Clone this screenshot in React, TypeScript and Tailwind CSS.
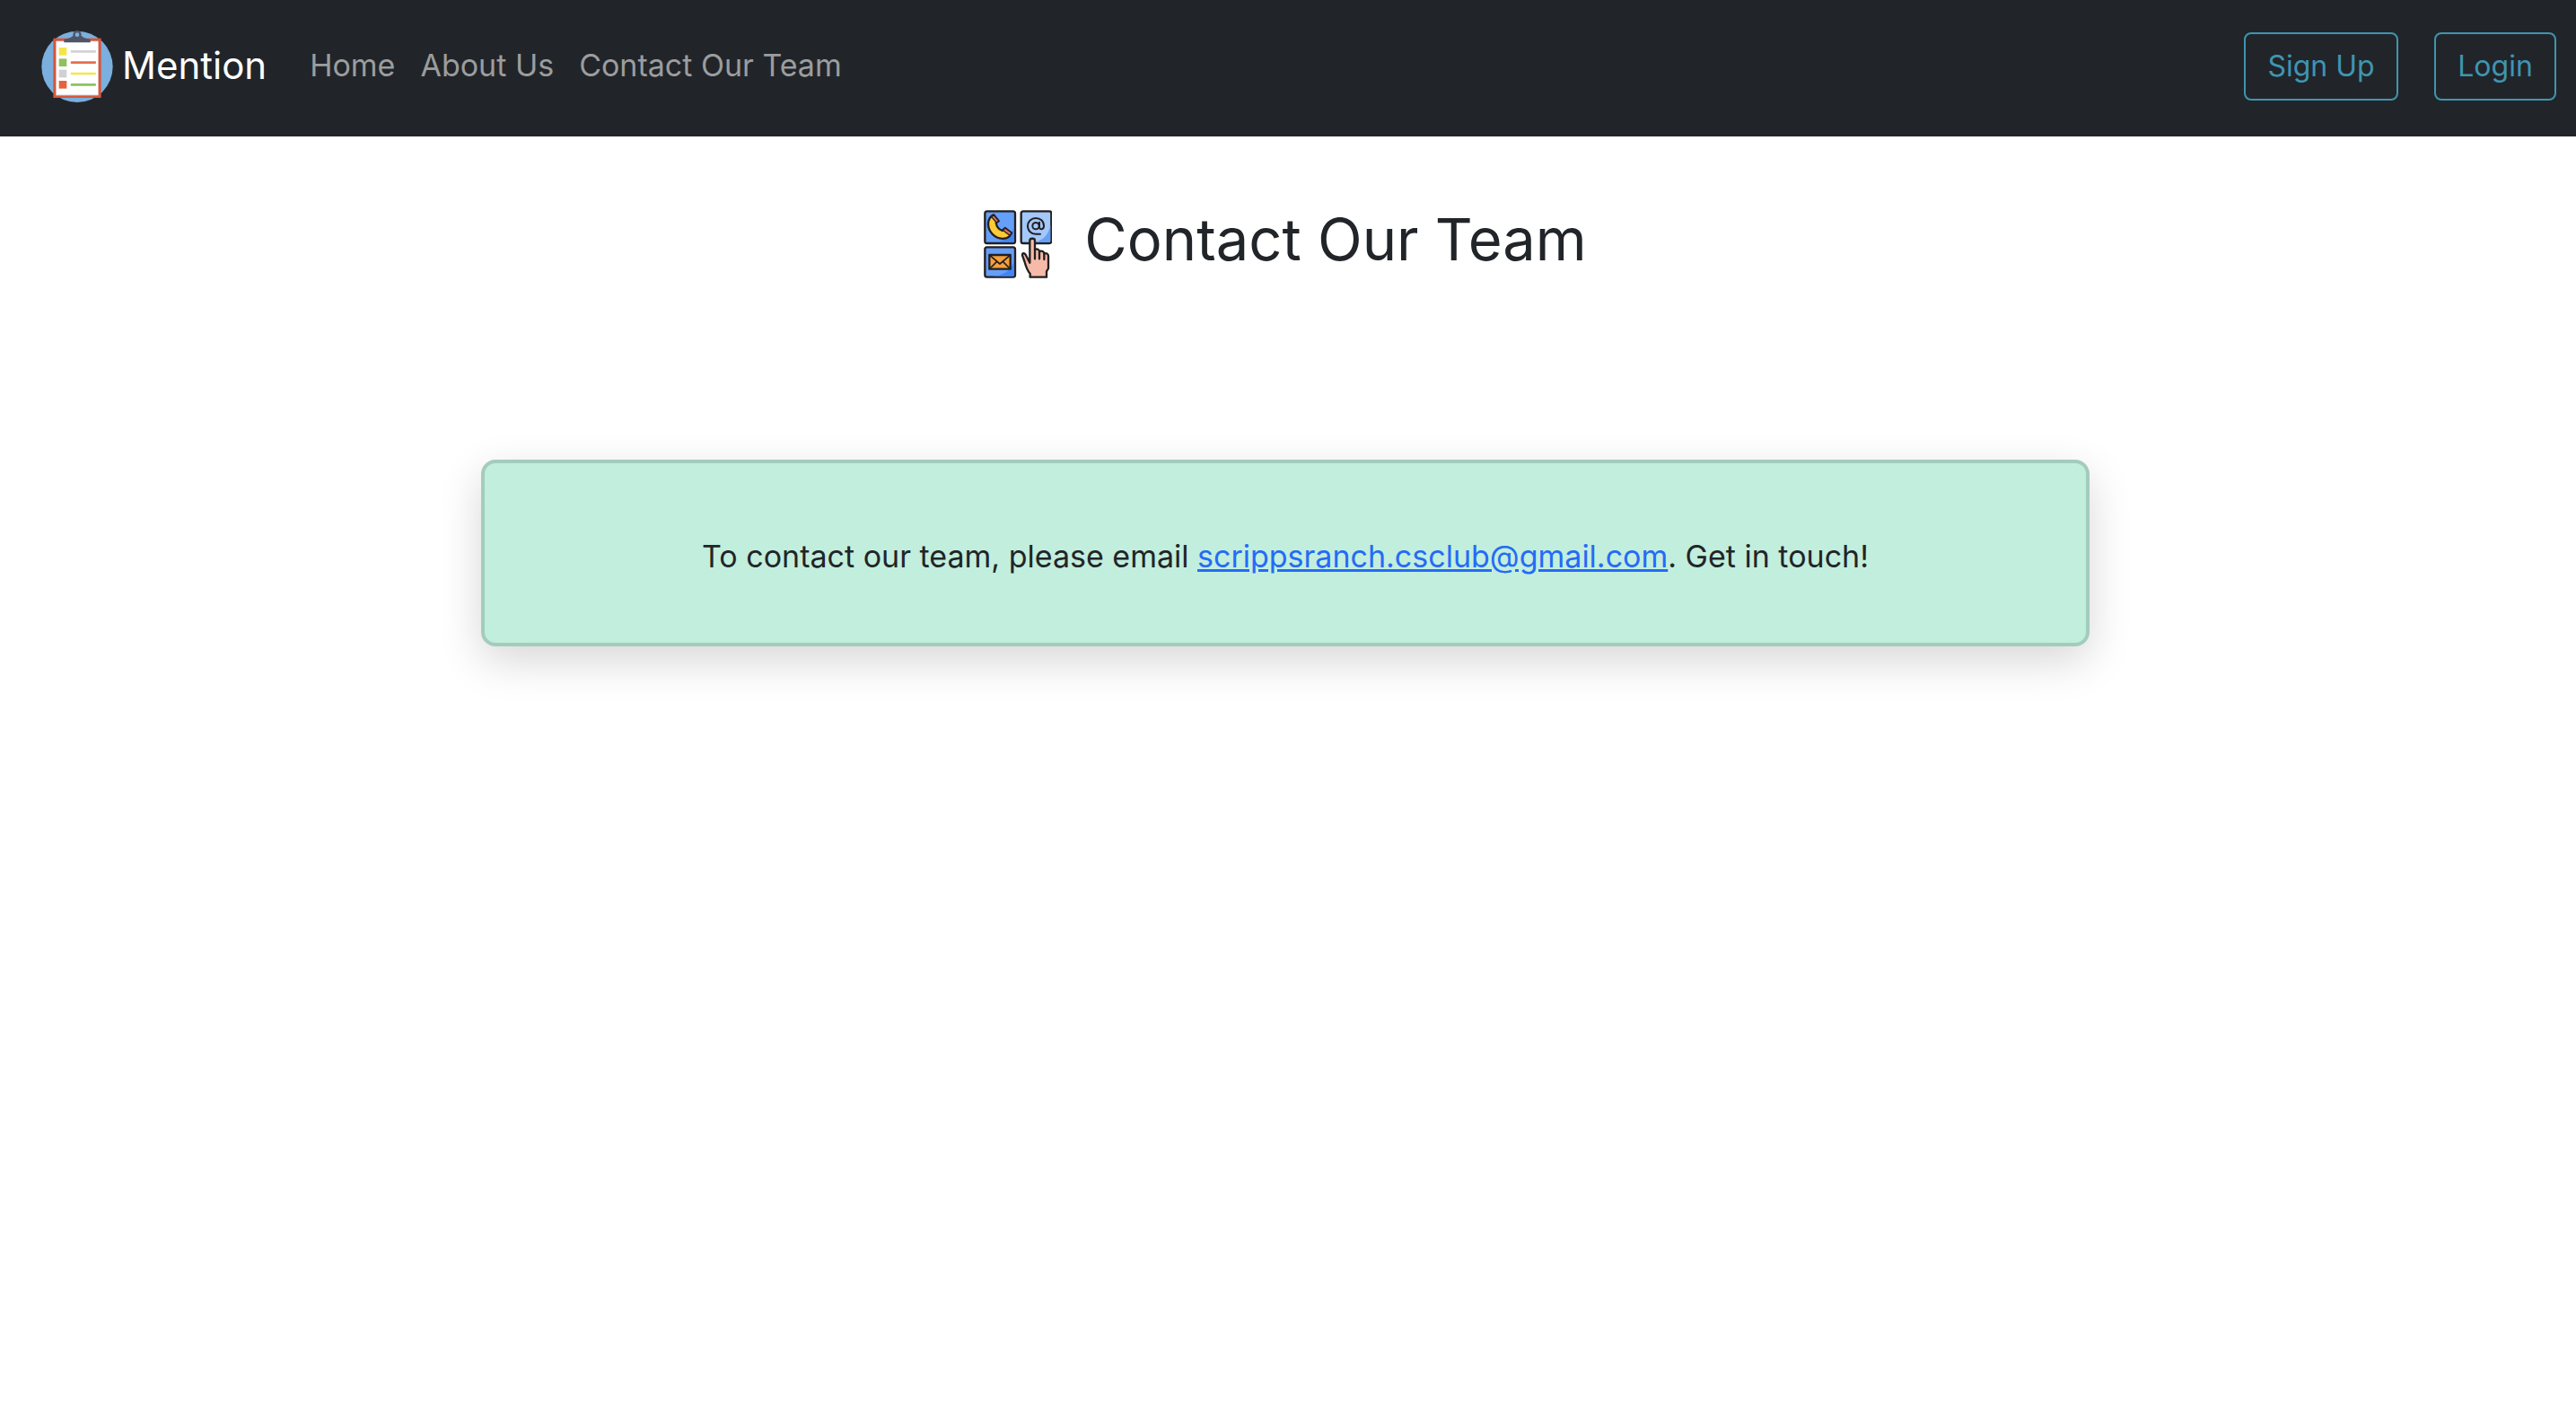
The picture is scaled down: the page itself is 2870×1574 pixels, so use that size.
const links = [
  { label: "Home", href: "#home" },
  { label: "About Us", href: "#about" },
  { label: "Contact Our Team", href: "#contact" },
]

const actions = [
  { label: "Sign Up", width: "min-w-[172px]" },
  { label: "Login", width: "min-w-[136px]" },
]

const rows = [
  { y: 99, box: "#f5e54b", line: "#d2d2d6" },
  { y: 136, box: "#8fc162", line: "#e5704f" },
  { y: 173, box: "#d1d1d4", line: "#f3e64e" },
  { y: 210, box: "#e4633f", line: "#8fc162" },
]

function ChecklistLogo() {
  return (
    <svg viewBox="48 42 240 240" className="h-20 w-20 shrink-0" aria-hidden="true">
      <circle cx="168" cy="163" r="119" fill="#7bafde" />
      <rect x="88" y="68" width="160" height="199" fill="#d6573a" />
      <rect x="97" y="77" width="142" height="182" fill="#e9e4e6" />
      <rect x="99" y="79" width="138" height="176" fill="#fff" />
      <path d="M124 82V72C138 68 150 65 154 59H182C186 65 198 68 212 72V82Z" fill="#4f5565" />
      <circle cx="168" cy="56" r="10.5" fill="#7bafde" stroke="#4f5565" strokeWidth="7" />
      {rows.map((row) => (
        <g key={row.y}>
          <rect x="107" y={row.y} width="26" height="26" fill={row.box} />
          <rect x="146" y={row.y + 9} width="85" height="8" rx="3" fill={row.line} />
        </g>
      ))}
    </svg>
  )
}

function ContactIcon() {
  return (
    <svg
      viewBox="54 57 228 228"
      className="h-[76px] w-[76px] shrink-0"
      fill="none"
      stroke="#231f20"
      strokeWidth="7"
      strokeLinecap="round"
      strokeLinejoin="round"
      aria-hidden="true"
    >
      <rect x="58" y="61" width="101" height="107" rx="7" fill="#659ff8" />
      <path d="M156 112V160Q156 165 151 165H84C120 163 146 145 156 112Z" fill="#3f86f8" stroke="none" />
      <rect x="179" y="61" width="101" height="107" rx="7" fill="#a3c8fa" />
      <path d="M277 108V160Q277 165 272 165H226C252 158 270 140 277 108Z" fill="#659ff8" stroke="none" />
      <rect x="58" y="181" width="101" height="100" rx="7" fill="#659ff8" />
      <path d="M156 225V273Q156 278 151 278H84C120 276 146 260 156 225Z" fill="#3f86f8" stroke="none" />

      <path
        d="M87 73C66 83 64 112 78 131C93 153 120 158 139 146L147 133L125 117L116 126C105 122 97 112 95 100L104 94Z"
        fill="#fdcb35"
      />
      <path d="M87 73L104 93L97 99L80 80Z" fill="#d9765b" strokeWidth="4" />
      <path d="M125 117L147 133L141 142L119 125Z" fill="#d9765b" strokeWidth="4" />

      <circle cx="228" cy="110" r="11" strokeWidth="6" />
      <path
        d="M240 98V114C240 124 255 123 255 110C255 94 243 84 228 84C213 84 201 95 201 110C201 126 213 137 228 137H243"
        strokeWidth="6"
      />

      <rect x="73" y="207" width="70" height="47" fill="#f5a03c" />
      <path d="M75 209L108 237L141 209M75 252L98 229M141 252L118 229" strokeWidth="5" />

      <path
        d="M209 281V270C199 258 195 246 190 228L183 208C182 200 190 200 194 206L208 233V159C208 150 225 150 225 159V190C232 184 240 189 240 196C248 191 256 196 256 203C264 199 270 204 270 211V252L264 262V281Z"
        fill="#f6bba8"
      />
      <path d="M225 188V220M240 196V220M256 203V222" />
    </svg>
  )
}

function Navbar() {
  return (
    <header className="flex min-h-[152px] flex-wrap items-center justify-between bg-[#212529] pl-[46px] pr-[22px] pb-1">
      <nav className="flex items-center" aria-label="Main">
        <a href="#home" className="mr-12 flex items-center gap-2.5 text-[42px] text-white">
          <ChecklistLogo />
          <span className="pb-1">Mention</span>
        </a>
        <ul className="flex items-center gap-7 pb-1 text-[34px] text-[#9b9d9e]">
          {links.map((link) => (
            <li key={link.label}>
              <a href={link.href} className="hover:text-white">
                {link.label}
              </a>
            </li>
          ))}
        </ul>
      </nav>
      <div className="flex items-center gap-10">
        {actions.map((action) => (
          <button
            key={action.label}
            type="button"
            className={`h-[76px] rounded-lg border-2 border-[#3f95b0] text-[32px] text-[#3f95b0] ${action.width}`}
          >
            {action.label}
          </button>
        ))}
      </div>
    </header>
  )
}

export default function App() {
  return (
    <div className="min-h-screen bg-white font-['Inter',sans-serif] text-[#212529]">
      <Navbar />
      <main className="flex flex-col items-center pt-[82px] pr-1.5">
        <div className="flex items-start gap-9">
          <ContactIcon />
          <h1 className="text-[65px] leading-[66px]">Contact Our Team</h1>
        </div>
        <section className="mt-[202px] w-full max-w-[1792px] rounded-2xl border-4 border-[#a3ccbc] bg-[#c2eedd] px-12 pt-20 pb-18 text-center shadow-[0_16px_48px_rgba(0,0,0,0.16)]">
          <p className="text-[34px] leading-12">
            To contact our team, please email{" "}
            <a href="mailto:scrippsranch.csclub@gmail.com" className="text-[#256bf6] underline">
              scrippsranch.csclub@gmail.com
            </a>
            . Get in touch!
          </p>
        </section>
      </main>
    </div>
  )
}
